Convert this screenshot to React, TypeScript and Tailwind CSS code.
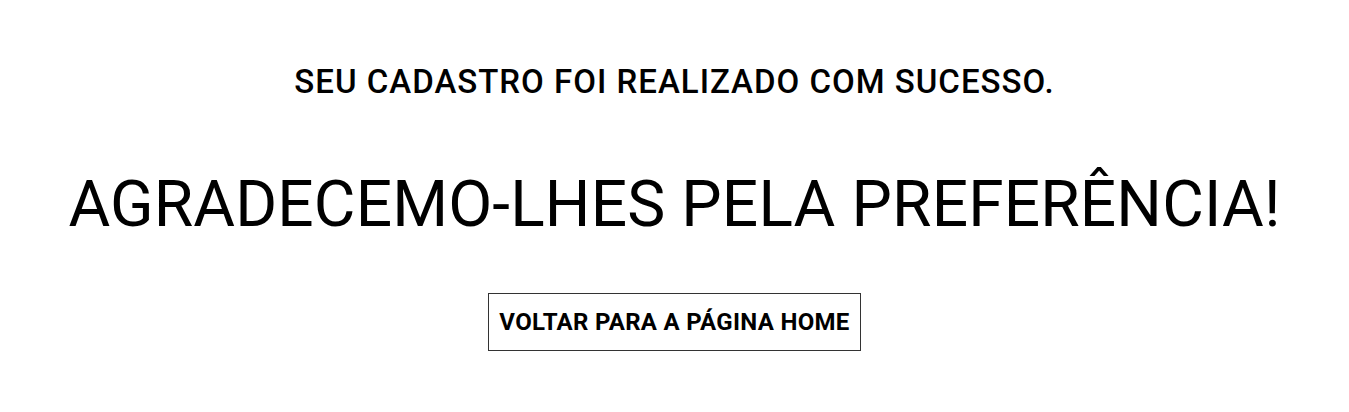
export default function App() {
  return (
    <div className="min-h-screen bg-white text-black flex flex-col items-center font-['Roboto',sans-serif]">
      <p className="mt-[65px] text-[33px] leading-[33px] font-medium tracking-[1px]">
        SEU CADASTRO FOI REALIZADO COM SUCESSO.
      </p>
      <h1 className="mt-[75px] text-[64px] leading-[64px] font-normal tracking-[0.15px]">
        AGRADECEMO-LHES PELA PREFERÊNCIA!
      </h1>
      <button className="mt-[56px] w-[373px] h-[58px] border border-[#333] text-[24px] leading-[24px] font-bold tracking-[0.3px] text-black">
        VOLTAR PARA A PÁGINA HOME
      </button>
    </div>
  )
}
